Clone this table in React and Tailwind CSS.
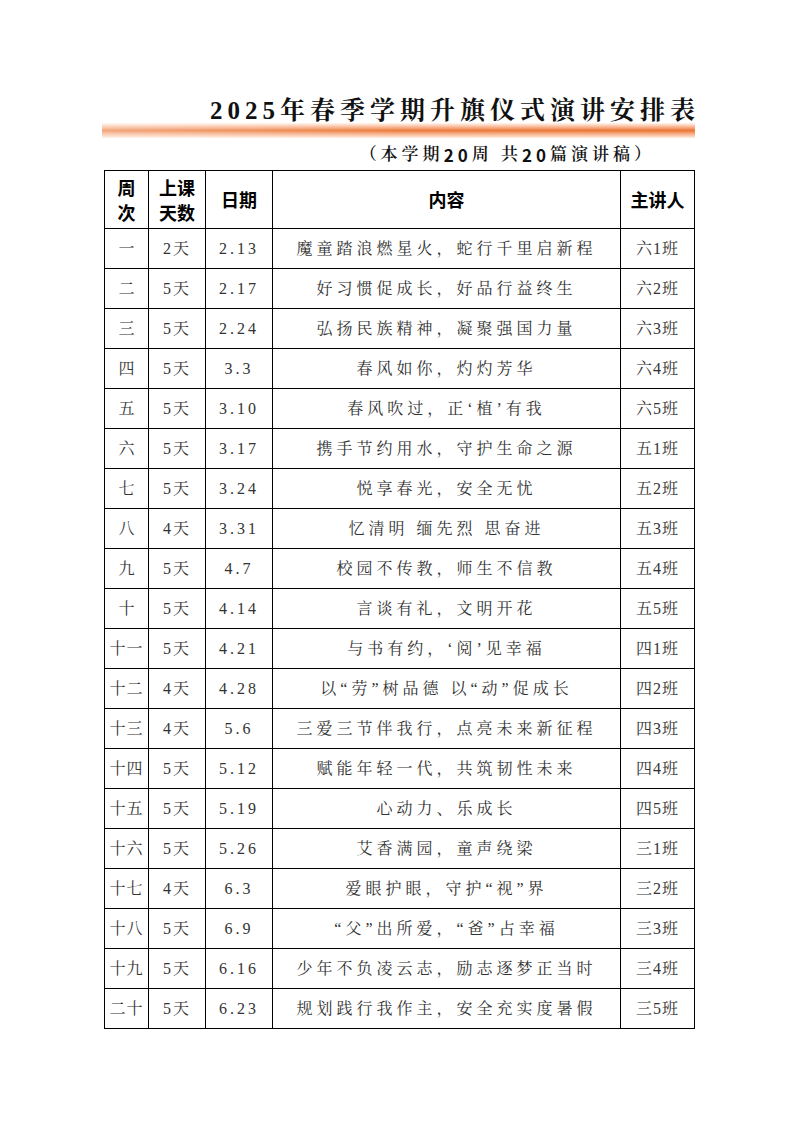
import React from 'react'

const ROWS = [
  ['一', '2天', '2.13', '魔童踏浪燃星火，蛇行千里启新程', '六1班'],
  ['二', '5天', '2.17', '好习惯促成长，好品行益终生', '六2班'],
  ['三', '5天', '2.24', '弘扬民族精神，凝聚强国力量', '六3班'],
  ['四', '5天', '3.3', '春风如你，灼灼芳华', '六4班'],
  ['五', '5天', '3.10', '春风吹过，正‘植’有我', '六5班'],
  ['六', '5天', '3.17', '携手节约用水，守护生命之源', '五1班'],
  ['七', '5天', '3.24', '悦享春光，安全无忧', '五2班'],
  ['八', '4天', '3.31', '忆清明 缅先烈 思奋进', '五3班'],
  ['九', '5天', '4.7', '校园不传教，师生不信教', '五4班'],
  ['十', '5天', '4.14', '言谈有礼，文明开花', '五5班'],
  ['十一', '5天', '4.21', '与书有约，‘阅’见幸福', '四1班'],
  ['十二', '4天', '4.28', '以“劳”树品德 以“动”促成长', '四2班'],
  ['十三', '4天', '5.6', '三爱三节伴我行，点亮未来新征程', '四3班'],
  ['十四', '5天', '5.12', '赋能年轻一代，共筑韧性未来', '四4班'],
  ['十五', '5天', '5.19', '心动力、乐成长', '四5班'],
  ['十六', '5天', '5.26', '艾香满园，童声绕梁', '三1班'],
  ['十七', '4天', '6.3', '爱眼护眼，守护“视”界', '三2班'],
  ['十八', '5天', '6.9', '“父”出所爱，“爸”占幸福', '三3班'],
  ['十九', '5天', '6.16', '少年不负凌云志，励志逐梦正当时', '三4班'],
  ['二十', '5天', '6.23', '规划践行我作主，安全充实度暑假', '三5班'],
]

const serif = "font-['Liberation_Serif','Noto_Serif_CJK_SC','Noto_Sans_CJK_SC',serif]"
const hei = "font-['Noto_Sans_CJK_SC','Liberation_Sans',sans-serif]"

export default function App() {
  return (
    <div className="w-[793px] h-[1122px] bg-white text-black">
      <div className="pt-[97px] pl-[102px] w-[695px]">
        {/* Title */}
        <div className={`h-[26px] flex justify-end items-end ${serif} font-bold text-[25px] leading-none tracking-[5px] text-[#111]`}>
          <span className="-mr-[5px]">2025年春季学期升旗仪式演讲安排表</span>
        </div>

        {/* Orange rule */}
        <div className="h-[15px] bg-gradient-to-b from-[#fff6ef] via-[#ea7630] to-[#fdeee2]">
          <div className="h-full w-full bg-gradient-to-r from-white/35 via-white/5 to-transparent" />
        </div>

        {/* Subtitle */}
        <div className={`h-[32px] pt-[2px] flex justify-end items-center pr-[40px] ${serif} font-semibold text-[17px] tracking-[4px] text-[#111]`}>
          （本学期<span className="font-['Noto_Sans_CJK_SC',sans-serif] font-semibold">20</span>周 共<span className="font-['Noto_Sans_CJK_SC',sans-serif] font-semibold">20</span>篇演讲稿）
        </div>
      </div>

      {/* Table */}
      <div className="pl-[104px]">
        <table className="border-collapse table-fixed w-[590px]">
          <colgroup>
            <col className="w-[44px]" />
            <col className="w-[57px]" />
            <col className="w-[67px]" />
            <col className="w-[348px]" />
            <col className="w-[74px]" />
          </colgroup>
          <thead>
            <tr className={`h-[58px] ${hei} font-bold text-[18px] leading-[25px] text-black`}>
              <th className="border border-black font-bold">周<br />次</th>
              <th className="border border-black font-bold">上课<br />天数</th>
              <th className="border border-black font-bold">日期</th>
              <th className="border border-black font-bold">内容</th>
              <th className="border border-black font-bold">主讲人</th>
            </tr>
          </thead>
          <tbody>
            {ROWS.map(([week, days, date, topic, speaker]) => (
              <tr key={week} className={`h-[40px] ${serif} text-[16px] text-[#333] text-center`}>
                <td className={`border border-black ${week.length > 1 ? 'tracking-[1px]' : ''} whitespace-nowrap p-0`}>{week}</td>
                <td className="border border-black tracking-[2px] p-0">{days}</td>
                <td className="border border-black tracking-[3px] p-0">{date}</td>
                <td className="border border-black tracking-[4px] p-0 whitespace-nowrap">{topic}</td>
                <td className="border border-black tracking-[1px] p-0">{speaker}</td>
              </tr>
            ))}
          </tbody>
        </table>
      </div>
    </div>
  )
}
